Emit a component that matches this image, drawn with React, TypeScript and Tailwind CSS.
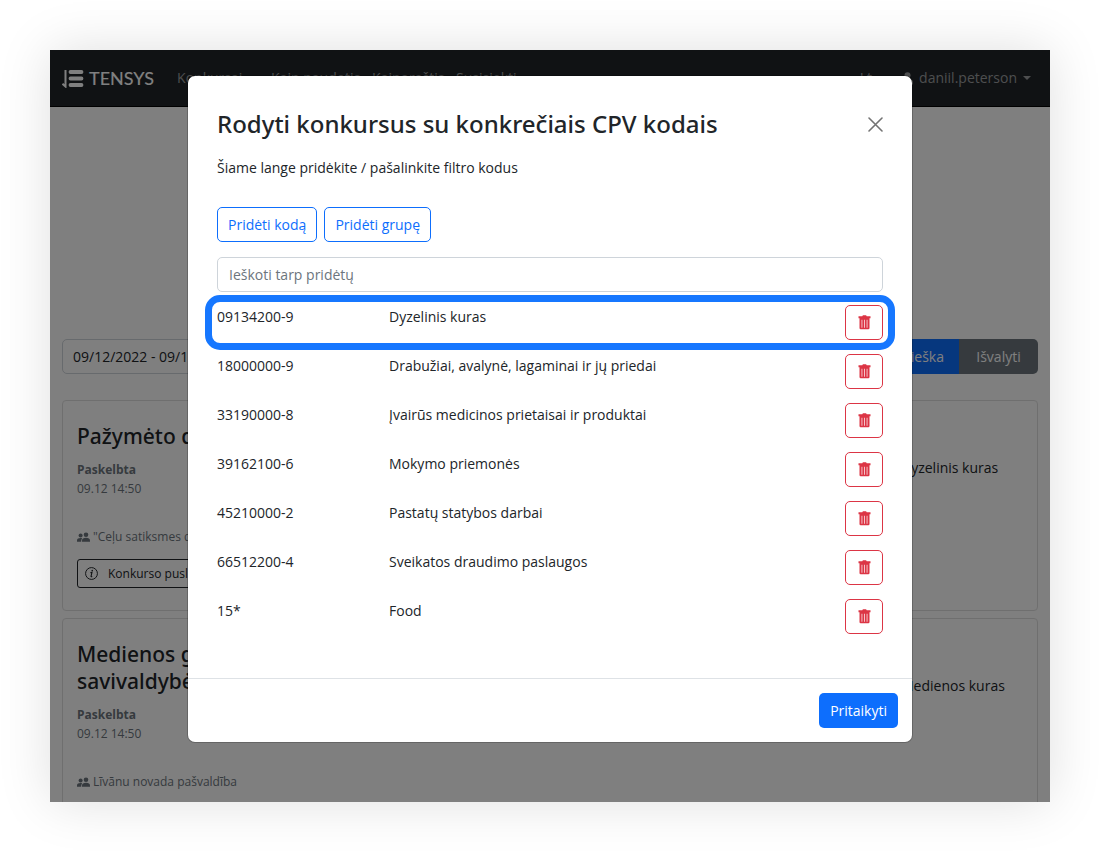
import type { ReactNode } from "react";

const codes = [
  ["09134200-9", "Dyzelinis kuras"],
  ["18000000-9", "Drabužiai, avalynė, lagaminai ir jų priedai"],
  ["33190000-8", "Įvairūs medicinos prietaisai ir produktai"],
  ["39162100-6", "Mokymo priemonės"],
  ["45210000-2", "Pastatų statybos darbai"],
  ["66512200-4", "Sveikatos draudimo paslaugos"],
  ["15*", "Food"],
];

function TrashIcon() {
  return (
    <svg width="13" height="15" viewBox="0 0 13 15" fill="currentColor" aria-hidden="true">
      <path
        fillRule="evenodd"
        d="M.5 1.3h3.8L4.9.3h3.2l.6 1h3.8v1.9H.5zM1.5 3.2h10v9.8a1.2 1.2 0 0 1-1.2 1.2H2.7a1.2 1.2 0 0 1-1.2-1.2zM3.600 4.800v7.900h.7V4.800zM6.150 4.800v7.900h.7V4.800zM8.700 4.800v7.900h.7V4.800z"
      />
    </svg>
  );
}

function PeopleIcon() {
  return (
    <svg width="13" height="11" viewBox="0 0 13 11" fill="currentColor" aria-hidden="true">
      <circle cx="3.600" cy="3.500" r="2" />
      <path d="M0 9.800V8.200C0 6.800 1.500 6.100 3.500 6.100c.7 0 1.300.1 1.800.300C4.500 7.100 4.200 7.900 4.200 9.800z" />
      <circle cx="9" cy="2.800" r="2.300" />
      <path d="M5 9.800V8.400C5 6.700 6.500 5.800 9 5.800s4 .9 4 2.600v1.400z" />
    </svg>
  );
}

function InfoIcon() {
  return (
    <svg width="13" height="13" viewBox="0 0 16 16" fill="none" stroke="currentColor" aria-hidden="true">
      <circle cx="8" cy="8" r="7.300" strokeWidth="1.200" />
      <path d="M6.700 6.900 8.600 6.700 7.400 11.500q0 .8 1.500.1" strokeWidth="1.300" />
      <circle cx="8.900" cy="4.500" r="1" fill="currentColor" stroke="none" />
    </svg>
  );
}

function Logo() {
  return (
    <svg width="22" height="19" viewBox="0 0 22 19" aria-hidden="true" fill="none" stroke="currentColor">
      <path d="M3.500 1v16.500L.5 14.800" strokeWidth="2" />
      <path d="M8.500 3h11M8.500 9.500h11M8.500 16h11" strokeWidth="3.800" strokeLinecap="round" />
    </svg>
  );
}

function Caret() {
  return <span className="border-x-4 border-t-4 border-x-transparent border-t-current" />;
}

function TenderCard({ title, buyer, cpv, children }: { title: string; buyer: string; cpv: string; children?: ReactNode }) {
  return (
    <article className="flex rounded border border-[#dfdfdf] px-[14px] pt-[22px] pb-[22px]">
      <div className="w-[824px] shrink-0">
        <h2 className="w-[300px] font-['Noto_Sans',sans-serif] text-[21px] leading-[27px] font-medium">{title}</h2>
        <p className="mt-[10px] text-xs leading-[19px] font-bold text-[#6c757d]">Paskelbta</p>
        <p className="text-xs leading-[19px] text-[#6c757d]">09.12 14:50</p>
        <p className="mt-[30px] flex items-center gap-[3px] text-xs leading-[18px] whitespace-nowrap text-[#6c757d]">
          <PeopleIcon />
          {buyer}
        </p>
        {children}
      </div>
      <p className="mt-[33px] text-sm leading-6 whitespace-nowrap">{cpv}</p>
    </article>
  );
}

export default function App() {
  return (
    <div className="h-screen bg-white p-[50px] font-['Open_Sans','Noto_Sans',sans-serif] text-sm text-[#212529]">
      <div className="relative h-full overflow-hidden bg-white shadow-[0_0_50px_rgba(0,0,0,0.13)]">
        <header className="flex h-[57px] items-center border-b border-black bg-[#212529] pr-[19px] pl-3 text-[#9b9d9f]">
          <a href="#" className="flex items-center gap-[5px] font-['Lato',sans-serif] text-lg font-medium text-white">
            <Logo />
            TENSYS
          </a>
          <nav className="ml-[23px] flex items-center gap-4 whitespace-nowrap">
            <a href="#" className="flex w-[78px] items-center gap-2">Konkursai <Caret /></a>
            <a href="#" className="w-[85px]">Kaip naudotis</a>
            <a href="#" className="w-[68px]">Kainoraštis</a>
            <a href="#">Susisiekti</a>
          </nav>
          <div className="ml-auto flex items-center gap-[30px]">
            <a href="#">Lt</a>
            <button type="button" className="flex items-center gap-[6px]">
              <svg width="11" height="13" viewBox="0 0 11 13" fill="currentColor" aria-hidden="true">
                <circle cx="5.500" cy="3.200" r="3" />
                <path d="M0 12.500V10c0-2 2-3 5.500-3s5.500 1 5.500 3v2.500z" />
              </svg>
              daniil.peterson
              <Caret />
            </button>
          </div>
        </header>
        <main className="px-3 pt-[232px]">
          <form className="flex h-[35px]">
            <input aria-label="Laikotarpis" defaultValue="09/12/2022 - 09/12/2022" className="min-w-0 flex-1 rounded-l-[5px] border border-[#ced4da] px-[10px]" />
            <button type="button" className="bg-[#0d6efd] px-[15px] text-white">Paieška</button>
            <button type="button" className="w-[79px] rounded-r-[5px] bg-[#6c757d] text-white">Išvalyti</button>
          </form>
          <div className="mt-[26px] flex flex-col gap-[7px]">
            <TenderCard title="Pažymėto dyzelino pirkimas" buyer={'"Ceļu satiksmes drošības direkcija"'} cpv="Dyzelinis kuras">
              <button type="button" className="mt-[13px] flex h-[29px] items-center gap-[10px] rounded-[3px] border border-[#212529] px-[7px] text-xs">
                <InfoIcon />
                Konkurso puslapis
              </button>
            </TenderCard>
            <TenderCard title="Medienos granulės savivaldybės įstaigoms" buyer="Līvānu novada pašvaldība" cpv="Medienos kuras" />
          </div>
        </main>

        <div className="absolute inset-0 flex items-start justify-center bg-black/50 px-[138px] pt-[26px]">
          <section role="dialog" aria-labelledby="dialog-title" className="w-full rounded-[7px] bg-white shadow-[0_0_0_1px_rgba(0,0,0,0.2)]">
            <div className="px-[29px] pt-8">
              <div className="flex items-center justify-between">
                <h1 id="dialog-title" className="font-['Noto_Sans',sans-serif] text-2xl leading-8 font-medium">Rodyti konkursus su konkrečiais CPV kodais</h1>
                <button type="button" aria-label="Uždaryti" className="text-[#737373]">
                  <svg width="15" height="15" viewBox="0 0 15 15" fill="none" stroke="currentColor" strokeWidth="1.600" strokeLinecap="round">
                    <path d="m1 1 13 13M14 1 1 14" />
                  </svg>
                </button>
              </div>
              <p className="mt-4 leading-6">Šiame lange pridėkite / pašalinkite filtro kodus</p>
              <div className="mt-[27px] flex gap-[7px]">
                <button type="button" className="h-[35px] rounded-[5px] border border-[#0d6efd] px-[10px] text-[#0d6efd]">Pridėti kodą</button>
                <button type="button" className="h-[35px] rounded-[5px] border border-[#0d6efd] px-[10px] text-[#0d6efd]">Pridėti grupę</button>
              </div>
              <input type="search" aria-label="Ieškoti tarp pridėtų" placeholder="Ieškoti tarp pridėtų" className="mt-[15px] block h-[35px] w-full rounded-[5px] border border-[#ced4da] px-[11px] placeholder:text-[#6c757d]" />
              <div className="relative mt-[13px] mb-[30px]">
                <table className="w-full">
                  <tbody>
                    {codes.map(([code, name]) => (
                      <tr key={code} className="h-[49px] align-top leading-6">
                        <td className="w-[172px]">{code}</td>
                        <td>{name}</td>
                        <td className="w-[38px]">
                          <button type="button" aria-label={`Pašalinti ${code}`} className="flex h-[35px] w-[38px] items-center justify-center rounded-[5px] border border-[#dc3545] text-[#dc3545]">
                            <TrashIcon />
                          </button>
                        </td>
                      </tr>
                    ))}
                  </tbody>
                </table>
                <div className="pointer-events-none absolute -inset-x-3 -top-[10px] h-[55px] rounded-[15px] border-[7px] border-[#1677ff]" />
              </div>
            </div>
            <footer className="flex justify-end border-t border-[#dee2e6] p-[14px]">
              <button type="button" className="h-[35px] rounded-[5px] bg-[#0d6efd] px-[11px] text-white">Pritaikyti</button>
            </footer>
          </section>
        </div>
      </div>
    </div>
  );
}
